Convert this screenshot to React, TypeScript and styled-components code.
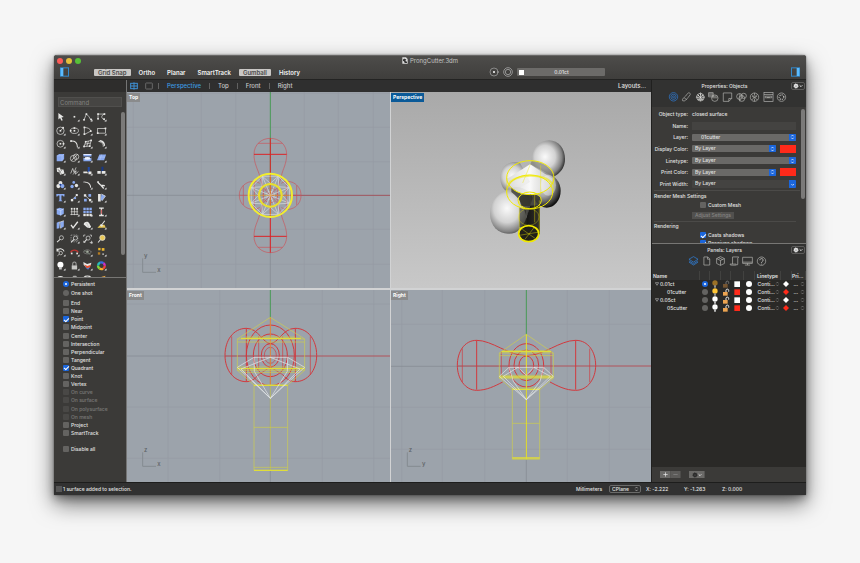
import React from "react";
import styled, { createGlobalStyle, css } from "styled-components";

const c = {
  panel: "#3b3a38",
  dark: "#30302f",
  list: "#2a2927",
  text: "#e2e2e1",
  blue: "#1b66dc",
  accent: "#3d9be0",
  red: "#ff2a1a",
  view: "#9ca3ab",
};

const Global = createGlobalStyle`
  * { box-sizing: border-box; }
  body { margin: 0; background: #f6f6f6; font-family: Inter, "Liberation Sans", sans-serif; font-size: 5px; font-weight: 500; line-height: 8px; color: ${c.text}; }
  button, input, select { font: inherit; color: inherit; margin: 0; padding: 0; border: 0; background: none; }
  svg { display: block; }
`;

const Page = styled.div`
  display: flex;
  height: 100vh;
  min-height: 480px;
  padding: 55px 54px 68px;
`;
const Window = styled.main`
  flex: 1;
  min-width: 0;
  display: flex;
  flex-direction: column;
  border-radius: 3px 3px 1px 1px;
  overflow: hidden;
  background: ${c.dark};
  box-shadow: 0 9px 22px rgba(0, 0, 0, 0.55), 0 4px 8px rgba(0, 0, 0, 0.3), 0 0 2px rgba(0, 0, 0, 0.5);
`;

/* Title bar and toolbar */
const Header = styled.header`
  height: 25px;
  background: linear-gradient(#4d4c4a, #3f3e3c);
  border-top: 1px solid #686766;
  border-bottom: 1px solid #232322;
`;
const TitleRow = styled.div`
  display: grid;
  grid-template-columns: 1fr auto 1fr;
  align-items: center;
  height: 9px;
  padding: 0 3px;
`;
const Lights = styled.div`
  display: flex;
  gap: 3px;
`;
const Light = styled.button<{ $color: string }>`
  width: 6px;
  height: 6px;
  border-radius: 50%;
  background: ${(p) => p.$color};
`;
const Title = styled.h1`
  display: flex;
  align-items: center;
  gap: 2px;
  margin: 0;
  font-size: 6px;
  font-weight: 400;
  color: #c4c4c3;
`;
const ToolRow = styled.div`
  display: grid;
  grid-template-columns: 34px auto 1fr auto 1fr auto;
  align-items: center;
  height: 14px;
  padding: 0 6px;
`;
const ModeList = styled.div`
  display: flex;
  align-items: center;
  gap: 4px;
`;
const Mode = styled.button<{ $on?: boolean }>`
  height: 7px;
  line-height: 7px;
  padding: 0 4px;
  border-radius: 1px;
  font-size: 6px;
  font-weight: 600;
  color: #f2f2f2;
  ${(p) => p.$on && css`
    color: #4a4a49;
    background: #c9c7c5;
  `}
`;
const LayerBar = styled.div`
  display: flex;
  align-items: center;
  gap: 4px;
`;
const LayerPick = styled.button`
  display: grid;
  grid-template-columns: 6px 1fr 6px;
  align-items: center;
  width: 88px;
  height: 8px;
  line-height: 8px;
  padding: 0 2px;
  border-radius: 1px;
  background: #6c6b69;
`;
const White = styled.span`
  width: 5px;
  height: 5px;
  background: #fff;
`;
const IconButton = styled.button`
  display: flex;
  align-items: center;
  justify-content: center;
`;
const SidebarButton = styled(IconButton)`
  justify-self: start;
`;

const Body = styled.div`
  flex: 1;
  min-height: 0;
  display: grid;
  grid-template-columns: 72px minmax(0, 1fr) 155px;
`;

/* Left column */
const Side = styled.aside`
  display: flex;
  flex-direction: column;
  min-height: 0;
  padding-top: 12px;
  background: linear-gradient(#2e2d2c 12px, ${c.panel} 12px);
`;
const Palette = styled.section`
  display: grid;
  grid-template-columns: 54px 1fr;
  grid-template-rows: 18px auto;
  height: 186px;
  overflow: hidden;
  border-bottom: 1px solid #777674;
`;
const Command = styled.input`
  grid-column: 1 / 3;
  height: 10px;
  margin: 5px 4px 0 4px;
  padding: 0 1px;
  font-size: 6px;
  font-weight: 400;
  background: #464543;
  border: 1px solid #504f4d;
  &::placeholder { color: #82817f; }
`;
const Tools = styled.div`
  display: grid;
  grid-template-columns: repeat(4, 1fr);
  grid-template-rows: repeat(13, 1fr);
  height: 176px;
`;
const Tool = styled.button`
  min-width: 0;
  min-height: 0;
  svg { width: 100%; height: 100%; }
`;
const Thumb = styled.div<{ $h: number }>`
  width: 4px;
  height: ${(p) => p.$h}px;
  margin: 2px 1px 0 auto;
  border-radius: 2px;
  background: #7b7a79;
`;
const Snaps = styled.section`
  padding: 2px 4px 0 9px;
`;
const SnapGroup = styled.div<{ $h: number }>`
  display: grid;
  grid-auto-rows: 1fr;
  height: ${(p) => p.$h}px;
  margin-bottom: 2px;
  &:last-child { margin-top: 8px; }
`;
const Check = styled.label<{ $off?: boolean }>`
  display: flex;
  align-items: center;
  gap: 2px;
  white-space: nowrap;
  opacity: ${(p) => (p.$off ? 0.35 : 1)};
`;
const Box = styled.input`
  appearance: none;
  flex: none;
  display: grid;
  place-items: center;
  width: 6px;
  height: 6px;
  border-radius: ${(p) => (p.type === "radio" ? "50%" : "1px")};
  background: #646361;
  &:checked { background: ${c.blue}; }
  &:checked::after {
    content: "";
    ${(p) => p.type === "radio"
      ? css`width: 2px; height: 2px; border-radius: 50%; background: #fff;`
      : css`width: 2px; height: 4px; border: solid #fff; border-width: 0 1px 1px 0; transform: rotate(45deg);`}
  }
`;

/* Centre */
const Centre = styled.section`
  display: flex;
  flex-direction: column;
  min-height: 0;
  border-left: 1px solid #747474;
`;
const Tabs = styled.nav`
  display: flex;
  align-items: center;
  height: 12px;
  padding: 0 5px 0 3px;
  background: #2f2f2f;
`;
const Tab = styled.button<{ $on?: boolean }>`
  padding: 0 8px;
  font-size: 6px;
  color: ${(p) => (p.$on ? c.accent : "#c8c8c8")};
  border-left: 1px solid #616161;
  height: 6px;
  line-height: 6px;
`;
const TabIcons = styled.div`
  display: flex;
  gap: 7px;
  margin-right: 5px;
`;
const Layouts = styled.button`
  margin-left: auto;
  font-size: 6px;
`;
const Views = styled.div`
  flex: 1;
  min-height: 0;
  display: grid;
  grid-template-columns: minmax(0, 263fr) minmax(0, 260fr);
  grid-template-rows: minmax(0, 196fr) minmax(0, 192fr);
  gap: 2px 1px;
  background: #d2d3d4;
`;
const View = styled.figure<{ $shaded?: boolean }>`
  position: relative;
  margin: 0;
  min-height: 0;
  overflow: hidden;
  background: ${(p) => (p.$shaded ? "linear-gradient(#a9a9a9, #c8c8c8)" : c.view)};
  svg { width: 100%; height: 100%; }
`;
const ViewName = styled.figcaption<{ $on?: boolean }>`
  position: absolute;
  top: 1px;
  left: 0;
  height: 9px;
  line-height: 9px;
  padding: 0 2px;
  font-weight: 700;
  color: #fff;
  background: ${(p) => (p.$on ? "#0b5a98" : "#8a8b8c")};
`;

/* Right column */
const Right = styled.aside`
  display: flex;
  flex-direction: column;
  min-height: 0;
  border-left: 1px solid #20201f;
  background: ${c.list};
`;
const PanelHead = styled.div`
  flex: none;
  height: 27px;
  background: #323231;
`;
const PanelTitle = styled.div`
  display: grid;
  grid-template-columns: 1fr 14px;
  align-items: center;
  height: 11px;
  padding-right: 1px;
  h2 { margin: 0 0 0 6px; font-size: 5px; font-weight: 500; text-align: center; }
`;
const Gear = styled.button`
  display: flex;
  align-items: center;
  justify-content: center;
  height: 8px;
  border: 1px solid #5c5b5a;
  border-radius: 2px;
`;
const PanelIcons = styled.div<{ $n: number }>`
  display: grid;
  grid-template-columns: repeat(${(p) => p.$n}, minmax(0, 122fr));
  width: ${(p) => (p.$n > 6 ? 122 : 82)}px;
  margin: 0 auto;
  height: 12px;
  position: static;
`;
const IconStrip = styled.div`
  padding-right: 3px;
`;
const PropScroll = styled.section`
  flex: none;
  display: grid;
  grid-template-columns: 1fr 6px;
  height: 137px;
  overflow: hidden;
  background: ${c.panel};
  border-bottom: 1px solid #777674;
`;
const PropBody = styled.div`
  padding: 1px 0 0 2px;
  min-height: 0;
`;
const Form = styled.div`
  display: grid;
  grid-template-columns: 34px 1fr;
  grid-auto-rows: 1fr;
  align-items: center;
  column-gap: 4px;
  height: 83px;
  padding-right: 4px;
  border-bottom: 1px solid #4b4a48;
`;
const FieldLabel = styled.label`
  justify-self: end;
  white-space: nowrap;
`;
const Field = styled.div`
  display: flex;
  align-items: center;
  gap: 4px;
`;
const TextBox = styled.input`
  width: 100%;
  height: 8px;
  background: #444341;
`;
const SelectWrap = styled.span<{ $flat?: boolean }>`
  flex: 1;
  display: grid;
  grid-template-columns: 1fr 7px;
  height: ${(p) => (p.$flat ? 8 : 7)}px;
  border-radius: 1px;
  overflow: hidden;
  background: ${(p) => (p.$flat ? "#444341" : "#6a6967")};
`;
const Select = styled.select<{ $indent?: boolean }>`
  appearance: none;
  grid-area: 1 / 1 / 2 / 3;
  padding-left: ${(p) => (p.$indent ? 9 : 3)}px;
  height: 7px;
  line-height: 7px;
`;
const Arrow = styled.span`
  grid-area: 1 / 2;
  pointer-events: none;
  display: grid;
  place-items: center;
  background: ${c.blue};
`;
const Swatch = styled.button`
  width: 16px;
  height: 8px;
  background: ${c.red};
`;
const Group = styled.div`
  height: 31px;
  padding-top: 1px;
  border-bottom: 1px solid #4b4a48;
  margin-right: 4px;
`;
const GroupTitle = styled.h3`
  margin: 0;
  height: 9px;
  line-height: 9px;
  font-size: 5px;
  font-weight: 500;
`;
const Indent = styled.div`
  padding-left: 46px;
`;
const Adjust = styled.button`
  display: block;
  width: 42px;
  height: 7px;
  line-height: 7px;
  margin: 3px 0 0 38px;
  color: #858482;
  background: #51504e;
`;
const Layers = styled.table`
  width: 100%;
  table-layout: fixed;
  border-collapse: collapse;
  th, td { padding: 0; height: 8px; line-height: 8px; text-align: left; white-space: nowrap; }
  th { font-weight: 600; height: 9px; background: #323231; border-right: 1px solid #424240; }
  th:first-child { padding-left: 1px; }
  th:nth-child(7) { padding-left: 2px; }
  td > svg, td > input { margin: 0 auto; }
`;
const Cell = styled.span<{ $in?: number }>`
  display: flex;
  align-items: center;
  justify-content: space-between;
  height: 8px;
  padding: 0 1px 0 ${(p) => p.$in ?? 0}px;
`;
const NameCell = styled.span<{ $child?: boolean }>`
  display: flex;
  align-items: center;
  gap: 1px;
  height: 8px;
  padding-left: ${(p) => (p.$child ? 15 : 3)}px;
`;
const ColW = styled.col<{ $w: number }>`
  width: ${(p) => p.$w}px;
`;
const Foot = styled.div`
  display: flex;
  align-items: center;
  gap: 8px;
  height: 15px;
  margin-top: auto;
  padding-left: 8px;
  background: ${c.panel};
`;
const Pair = styled.div`
  display: flex;
`;
const SmallButton = styled.button<{ $w: number; $dim?: boolean }>`
  display: flex;
  align-items: center;
  justify-content: center;
  width: ${(p) => p.$w}px;
  height: 7px;
  background: #6b6a68;
  border-right: 1px solid #565553;
  opacity: ${(p) => (p.$dim ? 0.7 : 1)};
`;

const Status = styled.footer`
  display: grid;
  grid-template-columns: 1fr 33px 37px 38px 38px 84px;
  align-items: center;
  height: 13px;
  border-top: 1px solid #1d1d1c;
  background: #313131;
`;
const Message = styled.div`
  display: flex;
  align-items: center;
  gap: 1px;
  padding-left: 2px;
`;
const Plane = styled.div`
  display: grid;
  grid-template-columns: 1fr 6px;
  align-items: center;
  width: 32px;
  height: 8px;
  border: 1px solid #6a6a69;
  border-radius: 2px;
  select { appearance: none; grid-area: 1 / 1 / 2 / 3; padding-left: 2px; height: 6px; line-height: 6px; }
  svg { grid-area: 1 / 2; pointer-events: none; }
`;

/* Glyphs */
const Stepper = ({ color = "#fff" }: { color?: string }) => (
  <svg width="5" height="6" viewBox="0 0 15 18" fill="none" stroke={color} strokeWidth="2">
    <path d="M4 7l3.500-4L11 7M4 11l3.500 4L11 11" />
  </svg>
);
const GearGlyph = ({ color = "#e4e4e4" }: { color?: string }) => (
  <svg width="10" height="6" viewBox="0 0 30 18" fill="none" stroke={color}>
    <circle cx="9" cy="9" r="4" strokeWidth="5" />
    <circle cx="9" cy="9" r="7" strokeWidth="2" strokeDasharray="2.500 3" />
    <path d="M20 7l4 4 4-4" stroke="#dadada" strokeWidth="3" />
  </svg>
);
const SidebarGlyph = ({ right }: { right?: boolean }) => (
  <svg width="9" height="10" viewBox="0 0 27 30">
    <rect x="1.500" y="2.500" width="24" height="25" fill="none" stroke="#3289cc" strokeWidth="3" />
    <rect x={right ? 17 : 2} y="3" width="8" height="24" fill="#5cbcff" />
  </svg>
);

const W = "#e6e6e4";
const B = "#8aaaf0";
const Y = "#e9c95a";
const dot = (x: number, y: number, f = W, s = 5) => <rect x={x - s / 2} y={y - s / 2} width={s} height={s} fill={f} />;
const line = (d: string, w = 2, s = W) => <path d={d} fill="none" stroke={s} strokeWidth={w} />;
const fill = (d: string, f = W) => <path d={d} fill={f} />;
const more = <path d="M34 28v6h-6z" fill="#f2f2f2" />;

const tools: [string, React.ReactNode][] = [
  ["Select", fill("M13 9v19l5-4 4 8 4-2-4-8 7-1z")],
  ["Point", <>{dot(19, 20)}{more}</>],
  ["Polyline", <>{line("M9 29L16 12L23 19L29 29")}{dot(9, 29)}{dot(16, 12)}{dot(30, 28)}{more}</>],
  ["Curve", <>{line("M9 12H28C18 16 16 24 30 30M9 12v14")}{dot(9, 12)}{dot(28, 12)}{dot(9, 26)}{dot(27, 27)}{more}</>],
  ["Circle", <><circle cx="19" cy="20" r="11" fill="none" stroke={W} strokeWidth="2" />{line("M19 20l7-7")}{dot(19, 20)}{dot(27, 11)}{more}</>],
  ["Ellipse", <><ellipse cx="19" cy="20" rx="12" ry="8" fill="none" stroke={W} strokeWidth="2" />{dot(19, 20)}{dot(19, 12)}{dot(8, 20)}{more}</>],
  ["Arc", <>{line("M10 31V10C20 11 28 14 29 21L10 31")}{dot(10, 10)}{dot(29, 21)}{dot(10, 30)}{more}</>],
  ["Rectangle", <><rect x="8" y="13" width="23" height="14" fill="none" stroke={W} strokeWidth="2" />{dot(31, 13)}{dot(8, 27)}{more}</>],
  ["Polygon", <><circle cx="19" cy="20" r="10" fill="none" stroke={W} strokeWidth="2" />{dot(19, 20)}{dot(28, 20)}{more}</>],
  ["Fillet curves", <>{line("M8 12C22 11 28 17 28 31", 3)}{dot(9, 12)}{more}</>],
  ["Surface", <>{line("M9 28L14 14L30 10L26 27zM12 21L28 18M22 12L17 28")}{dot(9, 28)}{dot(14, 14)}{dot(30, 10)}{dot(26, 27)}{more}</>],
  ["Sweep", <>{fill("M9 14l7-5c10 2 14 9 14 17l-7 3c2-8-3-13-14-15z")}{line("M14 14c9 2 11 7 12 12", 2, "#555")}{more}</>],
  ["Box", <>{fill("M8 14l7-5h15v15l-6 6H8z", B)}{line("M8 14h16l6-5M24 14v16", 1, "#d5e2ff")}{more}</>],
  ["Sphere", <><circle cx="16" cy="22" r="9" fill="none" stroke={W} strokeWidth="2" /><circle cx="24" cy="17" r="8" fill="none" stroke={W} strokeWidth="2" />{line("M10 28L29 10")}{more}</>],
  ["Cylinder", <>{fill("M7 10h24v6H7zM7 19c4 5 20 5 24 0v11H7z", B)}<ellipse cx="19" cy="22" rx="9" ry="4" fill="#eef3ff" />{line("M7 10h24", 3, "#dfe8ff")}{more}</>],
  ["Plane", <>{fill("M13 10h20l-6 17H6z", B)}{line("M20 10l-6 17M10 18h20", 1, "#d5e2ff")}{more}</>],
  ["Join", <>{fill("M8 12l10-2 1 6 9 0 3 12-13 4-2-7-7-2z")}{line("M11 16l8 6 4-4M14 22l8 6", 2, "#555")}{more}</>],
  ["Explode", <>{line("M8 28L14 13L18 25L24 10M15 31L24 20L22 30L31 22")}{more}</>],
  ["Trim", <>{fill("M20 9h6v15h-6z", "#234ba9")}{fill("M7 22h11l3 5H7zM22 22h9v8h-9z")}{more}</>],
  ["Split", <>{fill("M19 8h6v15h-6z", "#163889")}{fill("M7 21h10v8H7zM20 21h11v8H20z")}{more}</>],
  ["Group", <><circle cx="19" cy="15" r="6" fill={W} /><circle cx="13" cy="24" r="6" fill={W} /><circle cx="25" cy="24" r="6" fill={B} /><circle cx="19" cy="20" r="3" fill="#173b98" />{more}</>],
  ["Ungroup", <><circle cx="17" cy="13" r="4" fill={B} /><circle cx="12" cy="25" r="5" fill={B} /><circle cx="25" cy="22" r="5" fill={W} />{more}</>],
  ["Edit points", <>{line("M9 12C20 12 28 18 29 29", 3)}{dot(9, 12, "#777")}{more}</>],
  ["Rebuild", <>{line("M9 13L17 21L29 23M17 21L26 31", 4)}{dot(9, 12)}{more}</>],
  ["Text", <>{fill("M7 9h24v7h-3l-2-3h-4v14l4 3H13l3-3V13h-4l-2 3H7z", B)}{more}</>],
  ["Move", <>{dot(12, 27, W, 7)}{line("M14 24L24 14")}{dot(26, 12, W, 6)}{dot(21, 21, B, 6)}{more}</>],
  ["Copy", <>{dot(12, 13, W, 7)}{dot(26, 13, B, 8)}{dot(13, 27, B, 8)}{dot(27, 27, W, 7)}{line("M12 13L27 27")}{more}</>],
  ["Rotate", <>{fill("M9 9h8v22H9z")}{fill("M19 9l12 6-10 14-4-3z", B)}{line("M19 9l12 6-10 14")}{more}</>],
  ["Solid", <>{fill("M8 12l8-4 13 3v15l-9 5-12-4z", B)}{line("M8 12l12 4 9-5M20 16v15", 2, "#d5e2ff")}{more}</>],
  ["Extrude", <>{line("M7 28h24M8 20h22M11 10v20M19 10v20M27 10v20")}{dot(11, 11)}{dot(19, 11)}{dot(27, 11)}{more}</>],
  ["Array", <>{[10, 19, 28].map((x) => [11, 20, 29].map((y) => <rect key={x + "-" + y} x={x - 3} y={y - 3} width="7" height="7" fill={y === 29 ? W : B} />))}{more}</>],
  ["Align", <>{line("M12 9h14M12 31h14M19 9v22", 4)}{line("M19 14v12", 2, "#cc2020")}{more}</>],
  ["Boolean", <>{fill("M8 14l8-4v20l-8 2z", B)}{fill("M18 12l11-4v17l-9 6z", B)}{line("M16 11l4 20M18 12l11-4", 2)}{more}</>],
  ["Check", <>{line("M9 20l6 9L29 11", 4)}{more}</>],
  ["Dimension", <>{fill("M8 19c0-8 12-11 16-4l6 11c-3 6-9 3-12 2z")}{line("M16 14l7 14", 1, "#888")}{more}</>],
  ["Render", <>{fill("M7 29L16 20H28L32 29z", Y)}{line("M29 8L20 20", 3)}{fill("M14 21l5-3 5 5-4 3z")}{more}</>],
  ["Zoom", <><circle cx="22" cy="17" r="6" fill="none" stroke={W} strokeWidth="2" />{line("M18 22L9 30", 3)}</>],
  ["Zoom window", <><rect x="9" y="9" width="20" height="20" fill="none" stroke="#aaa" strokeWidth="2" strokeDasharray="4 3" /><circle cx="22" cy="18" r="6" fill="none" stroke={W} strokeWidth="2" />{line("M18 22L9 31", 3)}{more}</>],
  ["Zoom extents", <>{line("M8 14V9h5M26 9h5v5M8 26v5h5M26 31h5v-5")}<circle cx="21" cy="18" r="6" fill="none" stroke={W} strokeWidth="2" />{line("M17 22L10 30", 3)}{more}</>],
  ["Zoom selected", <><circle cx="22" cy="17" r="8" fill={Y} stroke={W} strokeWidth="2" />{line("M16 23L9 31", 3)}</>],
  ["Undo view", <>{line("M8 17c6-9 19-7 22 2M9 10v8h7", 3)}<circle cx="20" cy="24" r="5" fill="none" stroke={W} strokeWidth="2" />{line("M16 27l-6 5")}{more}</>],
  ["Car", <>{line("M8 22c3-9 19-9 22 0", 4, "#bb3430")}{dot(11, 25)}{dot(27, 25)}{more}</>],
  ["Hide", <>{line("M7 21c6-9 18-9 24 0-6 7-18 7-24 0z", 2, "#949492")}<circle cx="19" cy="20" r="4" fill="#a4aa9f" />{line("M8 15l20 14", 2, "#788878")}{more}</>],
  ["Blocks", <>{dot(13, 12, "#eab52e", 7)}{dot(24, 13, "#eab52e", 8)}{dot(12, 25, "#b77d21", 7)}{dot(24, 27, W, 4)}{more}</>],
  ["Lights", <><circle cx="19" cy="17" r="9" fill="#fff" />{fill("M15 24h8v7h-8z", "#ccc")}{more}</>],
  ["Lock", <>{line("M14 20v-6c0-7 10-7 10 0v6", 3, "#a5a5a4")}<rect x="11" y="19" width="16" height="12" fill="#c7c7c5" />{more}</>],
  ["Layers", <>{fill("M7 9l11 6 13-4-3 9-11 5-9-7z")}{fill("M9 16l10 5 10-4-2 8-9 3z", "#e8502d")}{fill("M11 24l8 3 8-4-6 9z", "#5380dd")}{more}</>],
  ["Color wheel", <>{["#f44336", "#f6b229", "#83d63b", "#25bdbc", "#376de8", "#d12ec4"].map((s, i) => <circle key={s} cx="19" cy="20" r="10" fill="none" stroke={s} strokeWidth="7" strokeDasharray="10.472 52.36" strokeDashoffset={-i * 10.472} />)}{more}</>],
  ["Material", <circle cx="19" cy="22" r="9" fill="none" stroke={W} strokeWidth="3" />],
  ["Camera", <>{fill("M8 15h5l3-4h8l3 4h4v14H8z", "#a9a9a7")}<circle cx="19" cy="22" r="4" fill="#444" /></>],
  ["Torus", <ellipse cx="19" cy="20" rx="11" ry="8" fill="none" stroke={W} strokeWidth="3" />],
  ["Paint", fill("M10 28L20 14l11-3-5 14z", "#e7a640")],
];

const snaps: [string, boolean?, boolean?][] = [
  ["End"], ["Near"], ["Point", true], ["Midpoint"], ["Center"], ["Intersection"], ["Perpendicular"], ["Tangent"],
  ["Quadrant", true], ["Knot"], ["Vertex"], ["On curve", false, true], ["On surface", false, true],
  ["On polysurface", false, true], ["On mesh", false, true], ["Project"], ["SmartTrack"],
];

const o = { fill: "none", stroke: "#b9b9b7", strokeWidth: 2 };
const propIcons: [string, React.ReactNode][] = [
  ["Object", <g {...o} stroke="#2f80e0"><circle cx="20" cy="18" r="13" /><circle cx="20" cy="18" r="8" /><circle cx="20" cy="18" r="3" /></g>],
  ["Material", <path {...o} d="M8 30c-3-7 5-9 9-14l7-9c4-4 10 1 7 5l-7 9c-6 6-8 12-16 9zM13 21l8 6" />],
  ["Texture", <g {...o} stroke="#e4e4e2"><path d="M20 6l8 5 4 8-4 9-8 3-8-3-5-9 4-8zM20 6v25M8 19h24M11 11l17 17M28 11L12 28" /><circle cx="20" cy="19" r="8" strokeWidth="3" strokeDasharray="4 3" /></g>],
  ["Decals", <g {...o}><circle cx="24" cy="22" r="10" /><path d="M5 5h14v13H5zM5 9h14M5 13h14M16 16h14M16 21h16" /></g>],
  ["Notes", <path {...o} d="M7 6h26v17l-9 9H7zM33 23h-9v9" />],
  ["Displacement", <g {...o}><circle cx="14" cy="17" r="9" /><circle cx="21" cy="23" r="9" /><circle cx="27" cy="15" r="8" /><path d="M15 8v24" /></g>],
  ["Edge softening", <g {...o}><circle cx="20" cy="19" r="13" /><path d="M11 10l18 18M29 10L11 28M20 6v8M20 24v8M12 16l8 5 8-5" /></g>],
  ["Shut lining", <g {...o}><rect x="6" y="5" width="28" height="27" /><path d="M6 11h28M10 16h20M10 16v5h20v-5M15 20h9" /></g>],
  ["Curve piping", <g {...o}><circle cx="20" cy="19" r="13" /><circle cx="20" cy="19" r="7" strokeDasharray="3 3" strokeWidth="4" /></g>],
];
const layerIcons: [string, React.ReactNode][] = [
  ["Layers", <path {...o} stroke="#2f86ea" d="M20 5l14 8-14 9-14-9zM6 18l14 9 14-9M6 22l14 9 14-9" />],
  ["Documents", <path {...o} d="M12 6h12l6 6v19H12zM23 6v7h7" />],
  ["Blocks", <path {...o} d="M20 5l12 6v15l-12 6-12-6V11zM8 11l12 6 12-6M20 17v15M14 8l12 6" />],
  ["Notes", <path {...o} d="M14 6h19l-3 4v18c0 4-5 4-5 0H6c0 4 8 4 19 3M14 6v22" />],
  ["Displays", <path {...o} d="M5 7h30v19H5zM20 26v5M12 31h16M5 22h30" />],
  ["Help", <g {...o}><circle cx="20" cy="19" r="13" /><path d="M15 16c0-7 11-6 10 0 0 4-5 4-5 8M20 27v2" strokeWidth="3" /></g>],
];

const rows = [
  { name: "0.01ct", current: true, color: "#fff", lamp: "#9b7126", body: "#765531" },
  { name: "01cutter", child: true, color: c.red, lamp: "#ffc636", body: "#eda451" },
  { name: "0.05ct", color: "#fff", lamp: "#ffffff", body: "#eda451" },
  { name: "05cutter", child: true, color: c.red, lamp: "#ffffff", body: "#eda451" },
];
const Bulb = ({ color }: { color: string }) => (
  <svg width="8" height="8" viewBox="0 0 24 24"><circle cx="12" cy="9" r="8" fill={color} /><path d="M9 16h6v7H9z" fill={color === "#ffffff" ? "#b9b9b9" : "#8e8e8a"} /></svg>
);
const Padlock = ({ color }: { color: string }) => (
  <svg width="8" height="8" viewBox="0 0 24 24"><path d="M12 12V7c0-5 8-5 8 0v4" fill="none" stroke={color === "#eda451" ? "#eee" : "#777"} strokeWidth="3" /><rect x="3" y="12" width="14" height="11" fill={color} /></svg>
);

/* Viewport drawings */
const Lines = ({ xs, ys }: { xs: number[]; ys: number[] }) => (
  <path stroke="#959ca4" strokeWidth="2" d={xs.map((x) => `M${x} 0V600`).join("") + ys.map((y) => `M0 ${y}H800`).join("")} />
);
const Axis = ({ x, y, v, h }: { x: number; y: number; v: string; h: string }) => (
  <g>
    <path d={`M${x} ${y - 42}V${y}H${x + 40}`} fill="none" stroke="#858b91" strokeWidth="3" />
    <g fontFamily="Inter, sans-serif" fontSize="18" fill="#5f6468">
      <text x={x + 4} y={y - 42}>{v}</text>
      <text x={x + 44} y={y}>{h}</text>
    </g>
  </g>
);

const spokes = Array.from({ length: 8 }, (_, i) => {
  const p = (r: number, d: number) => {
    const a = ((i * 45 + d) * Math.PI) / 180;
    return `${433 + r * Math.cos(a)} ${310 + r * Math.sin(a)}`;
  };
  return `M433 310L${p(62, 22.5)}M${p(36, 0)}L${p(62, 22.5)}L${p(36, 45)}M${p(62, 22.5)}L${p(62, 67.5)}`;
}).join("");

const TopDrawing = () => (
  <svg viewBox="3 0 789 588" preserveAspectRatio="xMidYMid slice" fill="none">
    <Lines xs={[22, 124, 226, 329, 535, 637, 742]} ys={[4, 106, 209, 412, 517]} />
    <path d="M0 310H433M433 310V588" stroke="#838a91" strokeWidth="2" />
    <path d="M433 0V310" stroke="#499956" strokeWidth="3" />
    <path d="M433 310H792" stroke="#a1545d" strokeWidth="3" />
    <g stroke="#cc555b" strokeWidth="2">
      <path d="M401 252C395 230 384 215 384 187C384 158 406 139 433 139S482 158 482 187C482 215 471 230 466 252" />
      <path d="M401 368C395 390 384 405 384 433C384 462 406 482 433 482S482 462 482 433C482 405 471 390 466 368" />
      <path d="M401 274C380 259 340 274 340 310S380 362 401 346M466 274C486 259 525 274 525 310S486 362 466 346M352 280v59M512 280v59M396 154h73M396 466h73" />
      <path d="M384 187h98M384 433h98M433 139v343" stroke="#dd2427" strokeWidth="3" />
      <path d="M385 268v84M481 268v84M401 256c16 38 16 70 0 108M466 256c-16 38-16 70 0 108M410 285l46 50M456 285l-46 50M340 310h32M494 310h31" />
      <circle cx="433" cy="310" r="22" strokeDasharray="14 7" />
    </g>
    <path d={spokes} stroke="#dcdde1" strokeWidth="2" />
    <circle cx="433" cy="310" r="12" stroke="#f0edf0" strokeWidth="2" strokeDasharray="3 4" />
    <path d="M433 248v124M371 310h124" stroke="#e6a330" strokeWidth="2" />
    <circle cx="433" cy="310" r="65" stroke="#f2ed2e" strokeWidth="6" />
    <circle cx="433" cy="310" r="34" stroke="#e8df2e" strokeWidth="6" />
    <Axis x={50} y={541} v="y" h="x" />
  </svg>
);

const FrontDrawing = () => (
  <svg viewBox="3 6 789 576" preserveAspectRatio="xMidYMid slice" fill="none">
    <Lines xs={[126, 281, 589, 743]} ys={[48, 357, 511]} />
    <path d="M0 204H433M433 204V582" stroke="#838a91" strokeWidth="2" />
    <path d="M433 6V90" stroke="#499956" strokeWidth="3" />
    <path d="M297 204H792" stroke="#b1525a" strokeWidth="3" />
    <g stroke="#d2393e" strokeWidth="3">
      <path d="M433 167C410 165 398 121 361 121C322 121 297 157 297 202S324 281 361 281C376 281 385 274 398 260M433 167C458 165 470 121 508 121C547 121 572 157 572 202S545 281 508 281C492 281 483 274 470 260" />
      <path d="M361 121v160M508 121v160" />
      <path d="M317 145v116M553 145v116M398 145v100M470 145v100M398 260l35-23 37 23" strokeWidth="2" />
      <ellipse cx="433" cy="202" rx="72" ry="91" />
      <ellipse cx="433" cy="202" rx="51" ry="64" />
      <ellipse cx="433" cy="202" rx="27" ry="35" />
      <ellipse cx="433" cy="202" rx="18" ry="24" strokeWidth="2" />
    </g>
    <path d="M433 88v205" stroke="#e58235" strokeWidth="3" />
    <path d="M334 153L433 88L536 153V247L485 291M334 153V247L384 291M334 153H536M334 162H536M360 147H507M334 237H536M334 247H536M346 253H522M384 291H485V547H384zM384 418H485M384 538H485M433 291v256" stroke="#cfcf4b" strokeWidth="2" />
    <path d="M345 151H525M334 242H536M384 292H485M384 547H485" stroke="#dfdd3a" strokeWidth="4" />
    <path d="M384 208H485L536 238L433 331L334 238zM384 208L385 250L433 331L484 250L485 208M433 208L345 243L433 331L522 243L433 208" stroke="#e6e8ea" strokeWidth="2" />
    <Axis x={50} y={535} v="z" h="x" />
  </svg>
);

const RightDrawing = () => (
  <svg viewBox="3 6 780 576" preserveAspectRatio="xMidYMid slice" fill="none">
    <Lines xs={[35, 157, 284, 532, 658]} ys={[109, 358, 484]} />
    <path d="M0 235H409M409 235V582" stroke="#838a91" strokeWidth="2" />
    <path d="M409 6V140" stroke="#499956" strokeWidth="3" />
    <path d="M202 234H783" stroke="#b1525a" strokeWidth="3" />
    <g stroke="#d2393e" strokeWidth="3">
      <path d="M409 203C356 203 306 157 260 157C222 157 202 193 202 232S225 307 260 307C290 307 315 294 338 282M409 203C461 203 510 157 557 157C596 157 617 193 617 232S594 307 557 307C527 307 503 294 480 282M260 157v148M557 157v148" />
      <path d="M217 182v101M599 182v101M334 190v75M483 190v75" strokeWidth="2" />
      <ellipse cx="409" cy="232" rx="52" ry="65" />
      <ellipse cx="409" cy="232" rx="37" ry="46" />
      <ellipse cx="409" cy="232" rx="22" ry="28" />
    </g>
    <path d="M328 195L409 139L490 195V270L449 305M328 195V270L367 305M340 188H478M328 195H490M328 203H490M328 262H490M328 272H490M367 300H449V514H367zM367 406H449" stroke="#cfcf4b" strokeWidth="2" />
    <path d="M409 139V514" stroke="#e8e225" strokeWidth="3" />
    <path d="M335 191H483M328 267H490M367 304H449M367 510H449" stroke="#dfdd3a" strokeWidth="4" />
    <path d="M357 238H461L490 265L409 335L328 265zM357 238L370 280L409 335L450 280L461 238M384 238L340 265L409 335L481 265L432 238L409 262L384 238" stroke="#e6e8ea" strokeWidth="2" />
    <Axis x={52} y={535} v="z" h="y" />
  </svg>
);

const PerspectiveDrawing = () => (
  <svg viewBox="3 0 780 588" preserveAspectRatio="xMidYMid slice" fill="none">
    <defs>
      <radialGradient id="ball" cx=".4" cy=".45" r=".62"><stop offset="0" stopColor="#fafafa" /><stop offset=".5" stopColor="#d2d2d2" /><stop offset=".82" stopColor="#818181" /><stop offset="1" stopColor="#2b2b2b" /></radialGradient>
      <radialGradient id="ballDark" cx=".35" cy=".3" r=".72"><stop offset="0" stopColor="#f4f4f4" /><stop offset=".5" stopColor="#a4a4a4" /><stop offset="1" stopColor="#111" /></radialGradient>
      <linearGradient id="stem"><stop offset="0" stopColor="#4b4b35" /><stop offset=".4" stopColor="#161614" /><stop offset="1" stopColor="#34342c" /></linearGradient>
      <linearGradient id="cone" x1="0" x2="1"><stop offset="0" stopColor="#d8d8d6" /><stop offset=".5" stopColor="#fff" /><stop offset="1" stopColor="#c1c1bf" /></linearGradient>
    </defs>
    <path d="M425 205C426 171 448 145 477 145S525 171 525 201C525 228 510 244 490 255L440 240z" fill="url(#ball)" />
    <path d="M390 213C361 202 331 222 331 257C331 280 341 296 360 303L420 270z" fill="url(#ball)" />
    <ellipse cx="470" cy="297" rx="42" ry="50" fill="url(#ballDark)" />
    <path d="M388 340H450V424C444 442 393 442 388 424z" fill="url(#stem)" />
    <path d="M375 287C340 292 300 319 300 365C300 400 324 425 355 425S398 406 408 380L428 318C422 298 400 284 375 287z" fill="url(#ball)" />
    <path d="M364 288C382 282 399 284 411 301C424 322 423 345 410 376C403 350 392 320 364 300z" fill="#33332e" opacity=".75" />
    <path d="M388 345L408 355V405H388z" fill="#26261d" opacity=".6" />
    <path d="M352 260L420 217L488 260C484 285 458 309 421 309S357 287 352 260z" fill="url(#cone)" opacity=".92" />
    <path d="M425 207C455 207 486 226 490 254L421 217z" fill="#77776f" opacity=".6" />
    <path d="M388 318C400 302 440 302 453 318L448 342H393z" fill="#34342b" opacity=".85" />
    <ellipse cx="475" cy="280" rx="23" ry="31" fill="#fff" opacity=".35" />
    <ellipse cx="416" cy="425" rx="29" ry="23" fill="#202018" />
    <g stroke="#f1e900">
      <ellipse cx="421" cy="257" rx="71" ry="51" strokeWidth="3" />
      <ellipse cx="419" cy="300" rx="69" ry="51" strokeWidth="3" />
      <path d="M356 277C370 246 466 240 487 276" strokeWidth="6" opacity=".55" />
      <ellipse cx="419" cy="325" rx="35" ry="25" strokeWidth="3" />
      <ellipse cx="416" cy="375" rx="31" ry="25" strokeWidth="2" opacity=".5" />
      <ellipse cx="416" cy="425" rx="30" ry="24" strokeWidth="5" />
      <path d="M350 257v42M490 257v42M388 325v100M448 325v100M434 301v90M421 217L398 273M452 220v90M397 412l38 27M432 407l-28 36M388 430l60-10" strokeWidth="2" opacity=".6" />
    </g>
  </svg>
);

const IconRow = ({ icons }: { icons: [string, React.ReactNode][] }) => (
  <IconStrip>
    <PanelIcons $n={icons.length}>
      {icons.map(([name, art]) => (
        <IconButton key={name} aria-label={name}>
          <svg width="13" height="12" viewBox="0 0 40 37">{art}</svg>
        </IconButton>
      ))}
    </PanelIcons>
  </IconStrip>
);

const Drop = ({ id, value, indent, flat }: { id: string; value: string; indent?: boolean; flat?: boolean }) => (
  <SelectWrap $flat={flat}>
    <Select id={id} $indent={indent} defaultValue={value}><option>{value}</option></Select>
    <Arrow>
      {flat ? <svg width="5" height="5" viewBox="0 0 15 15"><path d="M4 6l4 4 4-4" fill="none" stroke="#fff" strokeWidth="2" /></svg> : <Stepper />}
    </Arrow>
  </SelectWrap>
);

const PanelHeading = ({ title }: { title: string }) => (
  <PanelTitle>
    <h2>{title}</h2>
    <Gear aria-label={title + " options"}><GearGlyph /></Gear>
  </PanelTitle>
);

export default function App() {
  return (
    <Page>
      <Global />
      <Window>
        <Header>
          <TitleRow>
            <Lights>
              <Light $color="#fc5b57" aria-label="Close" />
              <Light $color="#e5bf3c" aria-label="Minimize" />
              <Light $color="#57c038" aria-label="Zoom" />
            </Lights>
            <Title>
              <svg width="6" height="7" viewBox="0 0 18 21"><path d="M1 1h11l5 5v14H1z" fill="#ddd" /><path d="M3 8c3-6 8 0 10-1l-3 5 5 2v4H8l-2-5-3-1z" fill="#333" /></svg>
              ProngCutter.3dm
            </Title>
          </TitleRow>
          <ToolRow>
            <SidebarButton aria-label="Toggle left sidebar"><SidebarGlyph /></SidebarButton>
            <ModeList>
              <Mode $on>Grid Snap</Mode>
              <Mode>Ortho</Mode>
              <Mode>Planar</Mode>
              <Mode>SmartTrack</Mode>
              <Mode $on>Gumball</Mode>
              <Mode>History</Mode>
            </ModeList>
            <span />
            <LayerBar>
              <IconButton aria-label="Record history">
                <svg width="10" height="10" viewBox="0 0 30 30"><circle cx="15" cy="15" r="12" fill="none" stroke="#aaa" strokeWidth="2" /><circle cx="15" cy="15" r="3" fill="#fff" /><path d="M25 15h4" stroke="#fff" strokeWidth="2" /></svg>
              </IconButton>
              <IconButton aria-label="Object properties">
                <svg width="10" height="10" viewBox="0 0 30 30" fill="none" stroke="#bbb" strokeWidth="2"><circle cx="15" cy="15" r="13" /><circle cx="15" cy="15" r="8" /></svg>
              </IconButton>
              <LayerPick><White />0.01ct</LayerPick>
            </LayerBar>
            <span />
            <IconButton aria-label="Toggle right sidebar"><SidebarGlyph right /></IconButton>
          </ToolRow>
        </Header>

        <Body>
          <Side>
            <Palette>
              <Command aria-label="Command" placeholder="Command" />
              <Tools>
                {tools.map(([name, art]) => (
                  <Tool key={name} aria-label={name}><svg viewBox="0 0 40 40">{art}</svg></Tool>
                ))}
              </Tools>
              <Thumb $h={143} />
            </Palette>
            <Snaps>
              <SnapGroup $h={17}>
                <Check><Box type="radio" name="snap" defaultChecked />Persistent</Check>
                <Check><Box type="radio" name="snap" />One shot</Check>
              </SnapGroup>
              <SnapGroup $h={138}>
                {snaps.map(([name, on, off]) => (
                  <Check key={name} $off={off}><Box type="checkbox" defaultChecked={on} disabled={off} />{name}</Check>
                ))}
              </SnapGroup>
              <SnapGroup $h={8}>
                <Check><Box type="checkbox" />Disable all</Check>
              </SnapGroup>
            </Snaps>
          </Side>

          <Centre>
            <Tabs>
              <TabIcons>
                <IconButton aria-label="Four viewports"><svg width="8" height="8" viewBox="0 0 24 24" fill="none" stroke="#3f8fd2" strokeWidth="3"><rect x="2" y="4" width="20" height="16" /><path d="M12 1v22M1 12h22" /></svg></IconButton>
                <IconButton aria-label="Single viewport"><svg width="8" height="8" viewBox="0 0 24 24"><rect x="2" y="3" width="20" height="18" rx="2" fill="none" stroke="#858585" strokeWidth="2" /></svg></IconButton>
              </TabIcons>
              <Tab $on>Perspective</Tab>
              <Tab>Top</Tab>
              <Tab>Front</Tab>
              <Tab>Right</Tab>
              <Layouts>Layouts...</Layouts>
            </Tabs>
            <Views>
              <View><TopDrawing /><ViewName>Top</ViewName></View>
              <View $shaded><PerspectiveDrawing /><ViewName $on>Perspective</ViewName></View>
              <View><FrontDrawing /><ViewName>Front</ViewName></View>
              <View><RightDrawing /><ViewName>Right</ViewName></View>
            </Views>
          </Centre>

          <Right>
            <PanelHead>
              <PanelHeading title="Properties: Objects" />
              <IconRow icons={propIcons} />
            </PanelHead>
            <PropScroll>
              <PropBody>
                <Form>
                  <FieldLabel as="span">Object type:</FieldLabel><span>closed surface</span>
                  <FieldLabel htmlFor="name">Name:</FieldLabel><TextBox id="name" />
                  <FieldLabel htmlFor="layer">Layer:</FieldLabel><Field><Drop id="layer" value="01cutter" indent /></Field>
                  <FieldLabel htmlFor="display">Display Color:</FieldLabel><Field><Drop id="display" value="By Layer" /><Swatch aria-label="Display color swatch" /></Field>
                  <FieldLabel htmlFor="linetype">Linetype:</FieldLabel><Field><Drop id="linetype" value="By Layer" /></Field>
                  <FieldLabel htmlFor="print">Print Color:</FieldLabel><Field><Drop id="print" value="By Layer" /><Swatch aria-label="Print color swatch" /></Field>
                  <FieldLabel htmlFor="width">Print Width:</FieldLabel><Field><Drop id="width" value="By Layer" flat /></Field>
                </Form>
                <Group>
                  <GroupTitle>Render Mesh Settings</GroupTitle>
                  <Indent><Check><Box type="checkbox" />Custom Mesh</Check></Indent>
                  <Adjust disabled>Adjust Settings</Adjust>
                </Group>
                <GroupTitle>Rendering</GroupTitle>
                <Indent>
                  <Check><Box type="checkbox" defaultChecked />Casts shadows</Check>
                  <Check><Box type="checkbox" defaultChecked />Receives shadows</Check>
                </Indent>
              </PropBody>
              <Thumb $h={90} />
            </PropScroll>
            <PanelHead>
              <PanelHeading title="Panels: Layers" />
              <IconRow icons={layerIcons} />
            </PanelHead>
            <Layers>
              <colgroup>
                <col /><ColW $w={10} /><ColW $w={11} /><ColW $w={10} /><ColW $w={13} /><ColW $w={11} /><ColW $w={26} /><ColW $w={11} /><ColW $w={14} />
              </colgroup>
              <thead>
                <tr><th>Name</th><th /><th /><th /><th /><th /><th>Linetype</th><th /><th>Pri...</th></tr>
              </thead>
              <tbody>
                {rows.map((r) => (
                  <tr key={r.name}>
                    <td>
                      <NameCell $child={r.child}>
                        {!r.child && <svg width="4" height="4" viewBox="0 0 12 12"><path d="M1 2h10l-5 8z" fill="none" stroke="#aaa" strokeWidth="2" /></svg>}
                        {r.name}
                      </NameCell>
                    </td>
                    <td><Box type="radio" name="current" aria-label={"Current " + r.name} defaultChecked={r.current} /></td>
                    <td><Bulb color={r.lamp} /></td>
                    <td><Padlock color={r.body} /></td>
                    <td><svg width="8" height="8" viewBox="0 0 24 24"><rect x="4" y="4" width="17" height="17" fill={r.color} /></svg></td>
                    <td><svg width="8" height="8" viewBox="0 0 24 24"><circle cx="12" cy="12" r="9" fill="#fff" /></svg></td>
                    <td><Cell $in={3}>Conti...<Stepper color="#888" /></Cell></td>
                    <td><svg width="8" height="8" viewBox="0 0 24 24"><path d="M12 3l9 9-9 9-9-9z" fill={r.color} /></svg></td>
                    <td><Cell $in={2}>...<Stepper color="#888" /></Cell></td>
                  </tr>
                ))}
              </tbody>
            </Layers>
            <Foot>
              <Pair>
                <SmallButton $w={11} aria-label="Add layer"><svg width="5" height="5" viewBox="0 0 15 15"><path d="M7.500 1v13M1 7.500h13" stroke="#eee" strokeWidth="2" /></svg></SmallButton>
                <SmallButton $w={10} $dim aria-label="Remove layer"><svg width="5" height="5" viewBox="0 0 15 15"><path d="M1 7.500h13" stroke="#aaa" strokeWidth="2" /></svg></SmallButton>
              </Pair>
              <SmallButton $w={16} aria-label="Layer options"><GearGlyph color="#2c2c2c" /></SmallButton>
            </Foot>
          </Right>
        </Body>

        <Status>
          <Message>
            <svg width="6" height="6" viewBox="0 0 18 18"><path d="M0 3h18M0 9h18M0 15h18" stroke="#7c7c7c" strokeWidth="3" /></svg>
            1 surface added to selection.
          </Message>
          <span>Millimeters</span>
          <Plane>
            <select aria-label="Coordinate system" defaultValue="CPlane"><option>CPlane</option></select>
            <Stepper color="#bbb" />
          </Plane>
          <span>X: -2.222</span>
          <span>Y: -1.263</span>
          <span>Z: 0.000</span>
        </Status>
      </Window>
    </Page>
  );
}
